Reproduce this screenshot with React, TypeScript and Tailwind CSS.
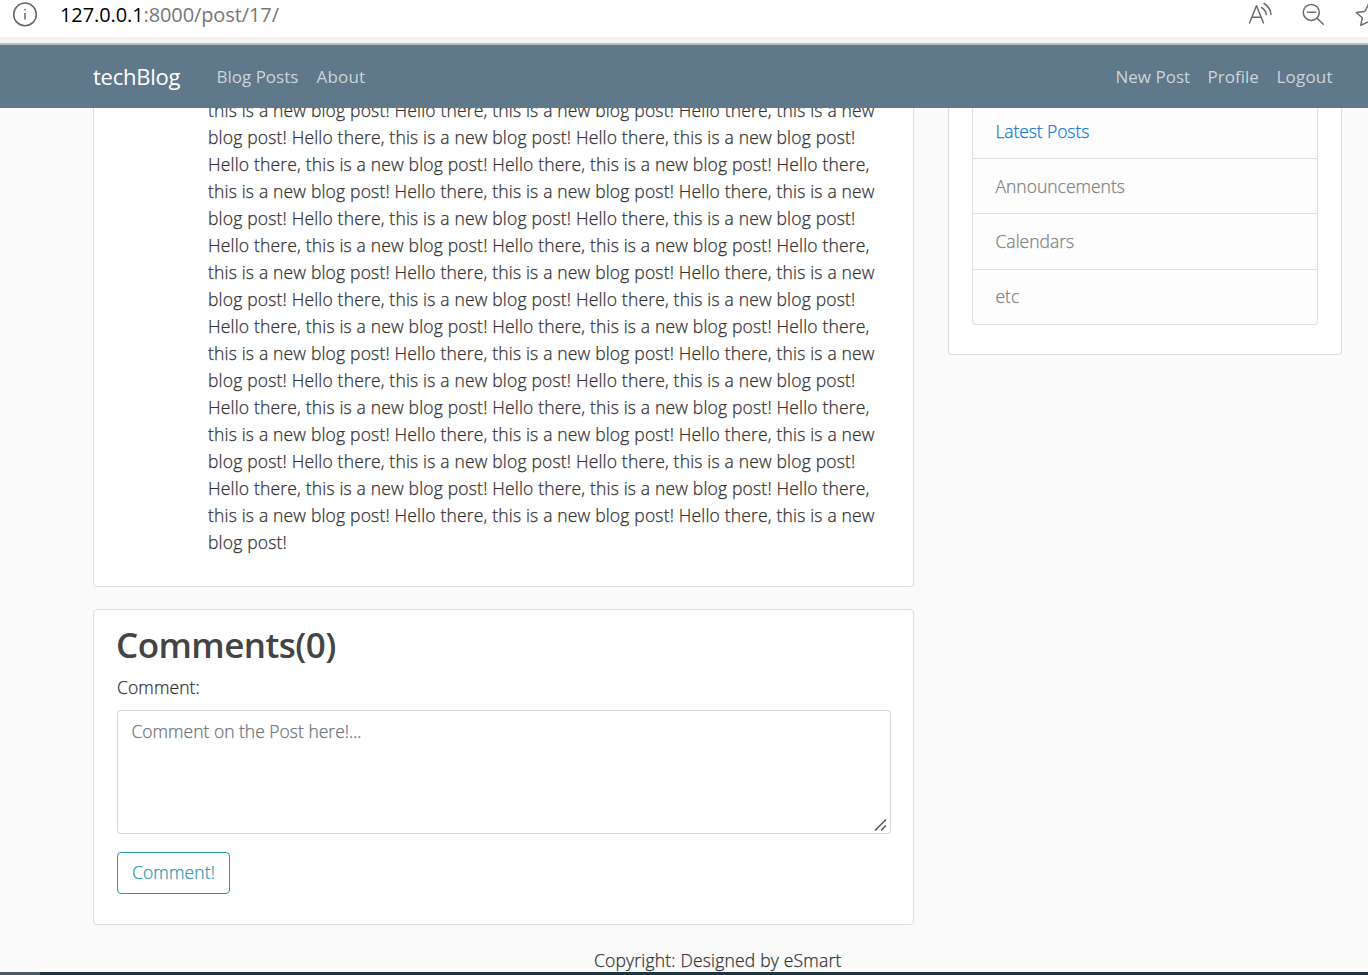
const SENTENCE = "Hello there, this is a new blog post!";

const CYCLE = [
  `this is a new blog post! ${SENTENCE} Hello there, this is a new`,
  `blog post! ${SENTENCE} ${SENTENCE}`,
  `${SENTENCE} ${SENTENCE} Hello there,`,
];

const LINES = [...CYCLE, ...CYCLE, ...CYCLE, ...CYCLE, ...CYCLE, CYCLE[0], "blog post!"];

function AddressBar() {
  return (
    <div className="flex h-[37px] shrink-0 items-start bg-white font-normal">
      <svg className="ml-3 mt-0.5 h-[26px] w-[26px] shrink-0" viewBox="0 0 26 26" fill="none" stroke="#666" strokeWidth="1.5">
        <circle cx="13" cy="12.4" r="11.3" />
        <path d="M13 11v6.5" />
        <circle cx="13" cy="7.6" r="0.6" fill="#666" strokeWidth="0.6" />
      </svg>
      <div className="ml-[22px] whitespace-nowrap text-[20px] leading-[30px] tracking-[-0.1px] text-[#767676]">
        <span className="text-black">127.0.0.1</span>:8000/post/17/
      </div>
      <svg className="ml-auto h-[30px] w-[128px] shrink-0" viewBox="1240 0 128 30" fill="none" stroke="#6b6b6b" strokeWidth="1.5" strokeLinecap="round" strokeLinejoin="round">
        <path d="M1249.500 23L1256.500 5.800L1263.500 23M1252 17.200H1261" />
        <path d="M1261.500 7.500Q1265.800 10 1266.300 14.500M1264 3.500Q1270.500 7.500 1271 14.500" />
        <circle cx="1311.300" cy="12.400" r="8" />
        <path d="M1317 18.200L1323.300 24.200M1307.500 12.300H1315.500" />
        <path d="M1369 3.500L1364.800 11.500L1356.200 12.500L1362.300 17.800L1360.800 25.200L1369 21.500" />
      </svg>
    </div>
  );
}

function NavBar() {
  return (
    <nav className="flex h-[63px] shrink-0 items-center whitespace-nowrap bg-[#5f788a] pl-[93px] pr-[34.500px] text-[17px] font-normal text-[#cbd5db]">
      <a className="w-[123.500px] text-[22px] tracking-[-0.25px] text-white">techBlog</a>
      <a className="w-[100px]">Blog Posts</a>
      <a className="tracking-[0.2px]">About</a>
      <a className="ml-auto w-[92px]">New Post</a>
      <a className="w-[69px]">Profile</a>
      <a className="w-[57px] tracking-[0.2px]">Logout</a>
    </nav>
  );
}

function Sidebar() {
  return (
    <aside className="h-[247px] w-[394px] rounded-b-[4px] border border-t-0 border-[#ddd] bg-white px-[23px] [-webkit-text-stroke:0.25px]">
      <ul className="rounded-b-[4px] border border-t-0 border-[#dfdfdf] bg-[#fdfdfe] text-[#818182]">
        <li className="flex h-[51px] items-center border-b border-[#dfdfdf] px-[22.500px] pb-[3px] tracking-[-0.1px] text-[#1278d8]">Latest Posts</li>
        <li className="flex h-[55px] items-center border-b border-[#dfdfdf] px-[22.500px]">Announcements</li>
        <li className="flex h-[56px] items-center border-b border-[#dfdfdf] px-[22.500px]">Calendars</li>
        <li className="flex h-[54px] items-center px-[22.500px] pb-0.5">etc</li>
      </ul>
    </aside>
  );
}

function Comments() {
  return (
    <section className="mt-[22px] h-[316px] rounded-[4px] border border-[#ddd] bg-white pl-[23px] pr-[22px] pt-[13px]">
      <h2 className="-ml-px whitespace-nowrap text-[35px] font-semibold leading-[43px] tracking-[-0.55px] text-[#444]">Comments(0)</h2>
      <div className="[-webkit-text-stroke:0.25px]">
        <label className="mt-2 block leading-[27px] tracking-[0.1px]">Comment:</label>
        <div className="mt-[9px] flex h-[124px] justify-between rounded-[4px] border border-[#ced4da] pl-[13.500px] pr-0.5 pt-[7px] leading-[27px] text-[#6c757d]">
          <span className="whitespace-nowrap">Comment on the Post here!...</span>
          <svg className="mb-[1px] h-[14px] w-[14px] self-end" viewBox="0 0 14 14" stroke="#555" strokeWidth="1.5">
            <path d="M1 12.500L12 1.500M7 12.500L12 7.500" />
          </svg>
        </div>
        <button className="mt-[18px] block h-[42px] w-[113px] whitespace-nowrap rounded-[4px] border border-[#2998a6] pb-0.5 tracking-[0.15px] text-[#2e9aab]">Comment!</button>
      </div>
    </section>
  );
}

export default function App() {
  return (
    <div className="flex h-[975px] w-[1368px] flex-col overflow-hidden bg-[#fafafa] font-['Open_Sans',sans-serif] text-[17.500px] font-light text-[#333]">
      <AddressBar />
      <div className="h-2 shrink-0 border-b-2 border-[#b4bfc0] bg-[#f2f2f2]" />
      <NavBar />
      <main className="flex h-[817px] shrink-0 items-start gap-[34px] overflow-hidden pl-[93px]">
        <div className="w-[821px]">
          <article className="h-[479px] overflow-hidden rounded-b-[4px] border border-t-0 border-[#ddd] bg-white pl-[114px]">
            <div className="-mt-[11px] whitespace-nowrap leading-[27px] tracking-[0.175px] [-webkit-text-stroke:0.25px]">
              {LINES.map((line, i) => (
                <p key={i}>{line}</p>
              ))}
            </div>
          </article>
          <Comments />
        </div>
        <Sidebar />
      </main>
      <footer className="h-[47px] shrink-0 pl-[594px] pt-[22px] leading-[27px] tracking-[0.19px] [-webkit-text-stroke:0.25px]">Copyright: Designed by eSmart</footer>
      <div className="flex h-[3px] shrink-0 bg-[#1d3441]">
        <div className="w-[40px] bg-[#4c5a60]" />
      </div>
    </div>
  );
}
